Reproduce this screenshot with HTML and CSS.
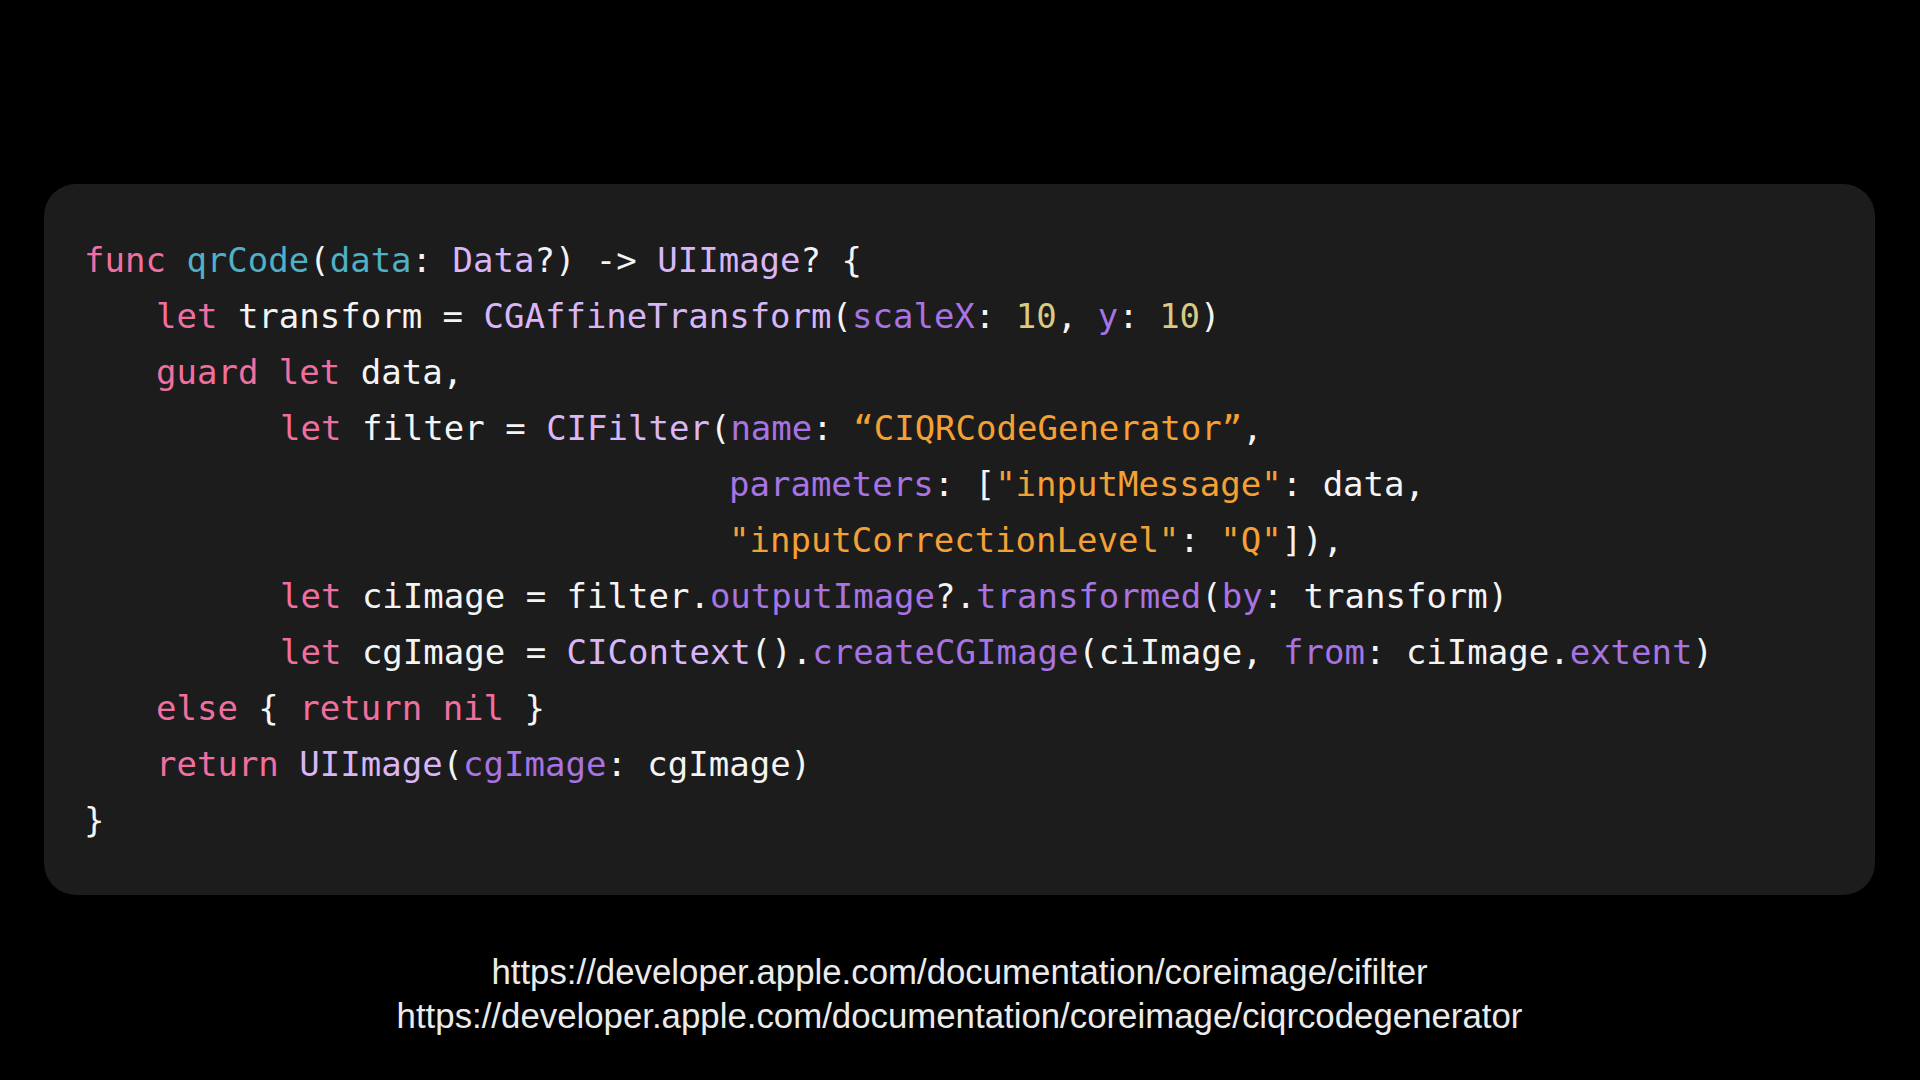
FILE: index.html
```html
<!DOCTYPE html>
<html lang="en">
<head>
<meta charset="utf-8">
<title>qrCode</title>
<link rel="stylesheet" href="styles.css">
</head>
<body>
<main class="slide">
  <section class="code-card">
    <div class="line"><span class="kw">func</span> <span class="decl">qrCode</span>(<span class="decl">data</span>: <span class="type">Data</span>?) -&gt; <span class="type">UIImage</span>? {</div>
    <div class="line i1"><span class="kw">let</span> transform = <span class="type">CGAffineTransform</span>(<span class="fn">scaleX</span>: <span class="num">10</span>, <span class="fn">y</span>: <span class="num">10</span>)</div>
    <div class="line i1"><span class="kw">guard</span> <span class="kw">let</span> data,</div>
    <div class="line i2"><span class="kw">let</span> filter = <span class="type">CIFilter</span>(<span class="fn">name</span>: <span class="str">“CIQRCodeGenerator”</span>,</div>
    <div class="line i3"><span class="fn">parameters</span>: [<span class="str">"inputMessage"</span>: data,</div>
    <div class="line i3"><span class="str">"inputCorrectionLevel"</span>: <span class="str">"Q"</span>]),</div>
    <div class="line i2"><span class="kw">let</span> ciImage = filter.<span class="fn">outputImage</span>?.<span class="fn">transformed</span>(<span class="fn">by</span>: transform)</div>
    <div class="line i2"><span class="kw">let</span> cgImage = <span class="type">CIContext</span>().<span class="fn">createCGImage</span>(ciImage, <span class="fn">from</span>: ciImage.<span class="fn">extent</span>)</div>
    <div class="line i1"><span class="kw">else</span> { <span class="kw">return</span> <span class="kw">nil</span> }</div>
    <div class="line i1"><span class="kw">return</span> <span class="type">UIImage</span>(<span class="fn">cgImage</span>: cgImage)</div>
    <div class="line">}</div>
  </section>
  <footer class="links">
    <p>https://developer.apple.com/documentation/coreimage/cifilter</p>
    <p>https://developer.apple.com/documentation/coreimage/ciqrcodegenerator</p>
  </footer>
</main>
</body>
</html>
```

FILE: styles.css
```css
html, body {
  margin: 0;
  padding: 0;
  background: #000;
}

.slide {
  width: 1920px;
  height: 1080px;
  box-sizing: border-box;
  padding: 184px 45px 0 44px;
  display: flex;
  flex-direction: column;
  align-items: stretch;
}

.code-card {
  background: #1c1c1c;
  border-radius: 32px;
  padding: 48px 40px 47px 40px;
  font-family: "DejaVu Sans Mono", "Liberation Mono", monospace;
  font-size: 34px;
  line-height: 56px;
  color: #f4f4f4;
}

.line {
  white-space: pre;
  height: 56px;
}

.i1 { padding-left: 72px; }
.i2 { padding-left: 196px; }
.i3 { padding-left: 645px; }

.kw { color: #f06fa0; }
.decl { color: #4fb0c6; }
.type { color: #d8b6f7; }
.fn { color: #a873e2; }
.str { color: #f4a035; }
.num { color: #d9ca82; }

.links {
  margin-top: 55px;
  text-align: center;
  font-family: "Liberation Sans", Arial, sans-serif;
  font-size: 34.8px;
  line-height: 44px;
  color: #ebebeb;
}

.links p {
  margin: 0;
}
```
